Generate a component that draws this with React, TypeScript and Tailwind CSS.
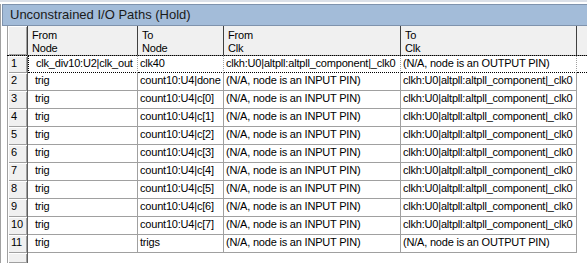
import React from "react";

type Row = [string, string, string, string];

const PLL = "clkh:U0|altpll:altpll_component|_clk0";
const IN_PIN = "(N/A, node is an INPUT PIN)";
const OUT_PIN = "(N/A, node is an OUTPUT PIN)";

const rows: Row[] = [
  ["clk_div10:U2|clk_out", "clk40", PLL, OUT_PIN],
  ["trig", "count10:U4|done", IN_PIN, PLL],
  ["trig", "count10:U4|c[0]", IN_PIN, PLL],
  ["trig", "count10:U4|c[1]", IN_PIN, PLL],
  ["trig", "count10:U4|c[2]", IN_PIN, PLL],
  ["trig", "count10:U4|c[3]", IN_PIN, PLL],
  ["trig", "count10:U4|c[4]", IN_PIN, PLL],
  ["trig", "count10:U4|c[5]", IN_PIN, PLL],
  ["trig", "count10:U4|c[6]", IN_PIN, PLL],
  ["trig", "count10:U4|c[7]", IN_PIN, PLL],
  ["trig", "trigs", IN_PIN, OUT_PIN],
];

const headers = [
  ["From", "Node"],
  ["To", "Node"],
  ["From", "Clk"],
  ["To", "Clk"],
];

const widths = ["w-[110px]", "w-[86px]", "w-[177px]", "w-[176px]"];
const pads = ["pl-[7px]", "pl-[2px]", "pl-[2px]", "pl-[2px]"];

const bevel =
  "bg-[#f0f0f0] shadow-[inset_1px_1px_0_#ffffff,inset_-1px_-1px_0_#a0a0a0]";

const App = () => {
  return (
    <div className="w-[587px] h-[263px] overflow-hidden bg-white text-black font-['Liberation_Sans',Arial,sans-serif]">
      <div className="h-[2px] bg-[#dbe0e8]" />
      <div className="h-[2px] bg-white" />
      <div className="flex h-[259px]">
        <div className="w-[2px] border-l border-[#a0a0a0]" />
        <div className="flex-1 flex flex-col min-w-0">
          {/* title bar */}
          <div className="h-[22px] border border-r-0 border-[#7f93ad] bg-[#a3bcd9] pl-[7px] text-[13px] leading-[20px] text-[#1a1a1a] whitespace-nowrap">
            Unconstrained I/O Paths (Hold)
          </div>

          <div className="flex-1 flex min-h-0">
            <div className="w-[5px] shrink-0" />
            <div className="flex-1 flex flex-col min-w-0 text-[11px] tracking-[-0.2px]">
              {/* header */}
              <div className="flex h-[30px] bg-[#f0f0f0] border-b border-[#808080]">
                <div className={`w-[21px] shrink-0 border-l border-[#a0a0a0] border-r border-r-[#404040] ${bevel}`} />
                {headers.map((h, i) => (
                  <div
                    key={i}
                    className={`${widths[i]} shrink-0 border-r border-[#404040] pl-[4px] pt-[3px] leading-[13px] whitespace-nowrap`}
                  >
                    <div>{h[0]}</div>
                    <div>{h[1]}</div>
                  </div>
                ))}
                <div className="flex-1" />
              </div>

              {/* data rows */}
              {rows.map((r, ri) => (
                <div
                  key={ri}
                  className={`flex h-[18px] ${
                    ri === 0 ? "border-t border-dotted border-black -mt-[1px]" : ""
                  }`}
                >
                  <div
                    className={`w-[21px] shrink-0 border-l border-[#a0a0a0] border-r border-r-[#606060] pl-[3px] leading-[15px] ${bevel}`}
                  >
                    {ri + 1}
                  </div>
                  {r.map((c, ci) => (
                    <div
                      key={ci}
                      className={`${widths[ci]} ${pads[ci]} shrink-0 overflow-hidden whitespace-nowrap leading-[14px] border-r border-[#a0a0a0] ${
                        ri === 0
                          ? `border-b border-b-black border-dotted ${ci === 0 ? "border-l border-l-black" : ""}`
                          : "border-b border-b-[#a0a0a0]"
                      }`}
                    >
                      {c}
                    </div>
                  ))}
                  <div
                    className={`flex-1 ${ri === 0 ? "border-b border-dotted border-black" : ""}`}
                  />
                </div>
              ))}

              {/* empty remainder */}
              <div className="flex flex-1">
                <div className={`w-[21px] shrink-0 border-l border-[#a0a0a0] border-r border-r-[#606060] ${bevel}`} />
                <div className="flex-1" />
              </div>
            </div>
          </div>
        </div>
      </div>
    </div>
  );
};

export default App;
